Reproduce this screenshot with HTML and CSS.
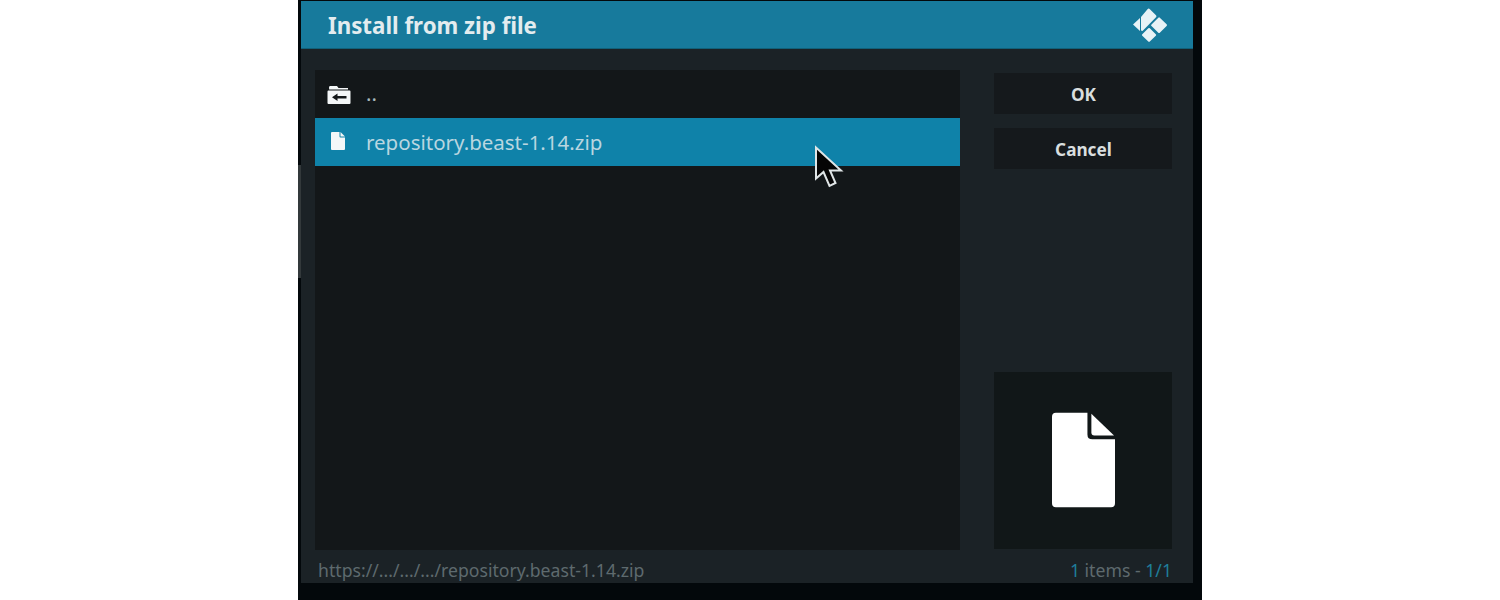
FILE: index.html
```html
<!DOCTYPE html>
<html lang="en">
<head>
<meta charset="utf-8">
<title>Install from zip file</title>
<link rel="stylesheet" href="styles.css">
</head>
<body>
<div class="screen">
  <div class="dialog">
    <header class="header">
      <h1 class="title">Install from zip file</h1>
      <svg class="logo" viewBox="0 0 34 34" aria-hidden="true">
        <path d="M0 16.500 7 10V23z"/>
        <path d="M8 22.500V9L14.500 1.200q1.200-1.200 2.400 0L23 7.300q1 1 0 2L9.500 23z"/>
        <path d="M25.300 9.700q.8-.7 1.500 0l6.800 6.600q.8.800 0 1.600l-6.800 6.800q-.7.700-1.500 0L18.500 18q-.8-.8 0-1.600z"/>
        <path d="M15.300 20.300q.8-.8 1.500 0l6 6q.8.800 0 1.500l-6 5.800q-.8.800-1.500 0l-6-5.800q-.8-.7 0-1.500z"/>
      </svg>
    </header>
    <div class="content">
      <div class="list">
        <div class="row">
          <svg class="row-icon folder" viewBox="0 0 24 20" aria-hidden="true">
            <path class="fill" d="M3 1h7l1.500 2H21v1.400H2.200L2 2.500Q2 1 3 1z"/>
            <path class="fill" fill-rule="evenodd" d="M1.500 5.600h21q1 0 1 1V18q0 1-1 1h-21q-1 0-1-1V6.600q0-1 1-1zM5 12.300l5.500 3.700v-2.500h9v-2.400h-9V8.600z"/>
          </svg>
          <span class="row-label up">..</span>
        </div>
        <div class="row selected">
          <svg class="row-icon file" viewBox="0 0 14 18" aria-hidden="true">
            <path class="fill" d="M1 0h7.500v4.500q0 1 1 1H14V17q0 1-1 1H1q-1 0-1-1V1q0-1 1-1z"/>
            <path class="fill" d="M9.500 0 14 4.500H9.500z"/>
          </svg>
          <span class="row-label">repository.beast-1.14.zip</span>
        </div>
      </div>
      <aside class="side">
        <button class="btn" type="button">OK</button>
        <button class="btn" type="button">Cancel</button>
        <div class="preview">
          <svg class="preview-icon" viewBox="0 0 64 96" aria-hidden="true">
            <path class="white" d="M4 0h32v22q0 5 5 5h23v65q0 4-4 4H4q-4 0-4-4V4q0-4 4-4z"/>
            <path class="white" d="M40 1 63 23H43q-3 0-3-3z"/>
          </svg>
        </div>
      </aside>
    </div>
    <footer class="status">
      <span class="path">https://.../.../.../repository.beast-1.14.zip</span>
      <span class="count"><span class="accent">1</span> items - <span class="accent">1/1</span></span>
    </footer>
  </div>
  <div class="edge"></div>
  <svg class="cursor" viewBox="0 0 30 44" aria-hidden="true">
    <path d="M2 2V33L9.500 26.500 15.500 40.500 21.500 37.500 16 25H27z"/>
  </svg>
</div>
</body>
</html>
```
FILE: styles.css
```css
* { box-sizing: border-box; }
html, body { margin: 0; height: 100%; background: #fff; }
body { font-family: "Noto Sans", "Open Sans", sans-serif; overflow: hidden; }

.screen {
  position: relative;
  width: 904px;
  height: 600px;
  margin: 0 auto;
  padding: 1px 9px 17px 3px;
  background: #03080b;
}
.edge {
  position: absolute;
  left: 0;
  top: 165px;
  width: 3px;
  height: 113px;
  background: #33393b;
}
.dialog {
  display: flex;
  flex-direction: column;
  height: 582px;
  background: #1b2226;
}
.header {
  display: flex;
  align-items: center;
  justify-content: space-between;
  flex: none;
  height: 48px;
  padding: 0 26px 0 27px;
  background: #177a9c;
  border-bottom: 1px solid #116079;
}
.title {
  margin: 2px 0 0;
  font-size: 22.3px;
  font-weight: 700;
  color: #e3ecef;
}
.logo { width: 34px; height: 34px; fill: #e8f2f6; }

.content {
  display: flex;
  flex: 1;
  min-height: 0;
  padding: 21px 21px 0 14px;
}
.list {
  width: 645px;
  height: 480px;
  background: #131719;
}
.row {
  display: flex;
  align-items: center;
  height: 48px;
  padding-left: 12px;
  color: #a8b8bd;
  font-size: 20.5px;
}
.row.selected { background: #0f82a9; color: #b9d6e0; }
.row-icon { flex: none; }
.row-label { margin-left: 15px; }
.row-label.up { margin-top: -2px; }
.folder { width: 24px; height: 20px; margin-top: 1px; }
.file { width: 14px; height: 18px; margin: -2px 6px 0 4px; }
.row.selected .row-label { margin-top: -1px; }
.fill { fill: #f4f7f8; }
.white { fill: #fff; }

.side {
  display: flex;
  flex-direction: column;
  width: 178px;
  margin-left: 34px;
  padding-top: 3px;
}
.btn {
  height: 41px;
  margin-bottom: 14px;
  padding: 2px 0 0 1px;
  border: 0;
  background: #15191c;
  color: #d9dedf;
  font: 700 17.200px "Noto Sans", "Open Sans", sans-serif;
}
.preview {
  display: flex;
  align-items: center;
  justify-content: center;
  height: 177px;
  margin-top: 189px;
  background: #111718;
}
.preview-icon { width: 63px; height: 96px; margin: -2px 0 0 1px; }

.status {
  display: flex;
  align-items: center;
  justify-content: space-between;
  flex: none;
  height: 33px;
  padding: 6px 21px 0 17px;
  font-size: 17.650px;
  color: #5e6a6e;
}
.count { color: #5e6a6e; }
.accent { color: #1f7d99; }

.cursor {
  position: absolute;
  left: 516px;
  top: 145px;
  width: 30px;
  height: 45px;
  fill: #050505;
  stroke: #dfe5e6;
  stroke-width: 2;
  stroke-linejoin: miter;
}
```
